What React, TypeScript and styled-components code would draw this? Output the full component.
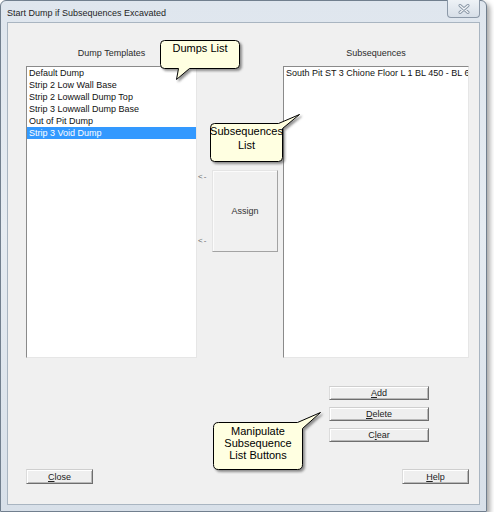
import * as React from "react";
import styled, { createGlobalStyle } from "styled-components";

const GlobalStyle = createGlobalStyle`
  html, body {
    margin: 0;
    padding: 0;
    background: #ffffff;
  }
  body {
    font-family: "Liberation Sans", Arial, sans-serif;
  }
`;

const Window = styled.div`
  position: relative;
  box-sizing: border-box;
  width: 487px;
  height: 512px;
  border: 1px solid #717f8e;
  border-radius: 6px 6px 0 0;
  background: linear-gradient(180deg, #dfe6ee 0%, #e6ecf2 45%, #d8e0e9 100%);
  box-shadow: 3px 3px 5px rgba(0, 0, 0, 0.35);
  display: flex;
  flex-direction: column;
`;

const TitleBar = styled.div`
  height: 21px;
  display: flex;
  align-items: flex-start;
  justify-content: space-between;
  padding: 0 6px;
`;

const Title = styled.span`
  font-size: 9px;
  line-height: 24px;
  color: #1e1e1e;
`;

const CloseBox = styled.div`
  box-sizing: border-box;
  width: 33px;
  height: 18px;
  margin-top: -1px;
  border: 1px solid #8c99a8;
  border-top: none;
  border-radius: 0 0 4px 4px;
  background: linear-gradient(180deg, #eef2f6, #d7dfe8);
  display: flex;
  align-items: center;
  justify-content: center;
`;

const Client = styled.div`
  box-sizing: border-box;
  height: 483px;
  margin: 0 6px;
  border: 1px solid #a9b5c1;
  background: #f0f0f0;
  padding: 24px 10px 20px 18px;
  display: flex;
  flex-direction: column;
`;

const Panes = styled.div`
  display: grid;
  grid-template-columns: 171px 86px 186px;
  grid-template-rows: 13px 292px;
  row-gap: 6px;
`;

const PaneLabel = styled.div<{ $col: number }>`
  grid-column: ${(p) => p.$col};
  grid-row: 1;
  font-size: 9px;
  line-height: 13px;
  text-align: center;
  color: #2a2a2a;
`;

const ListBox = styled.div<{ $col: number }>`
  grid-column: ${(p) => p.$col};
  grid-row: 2;
  box-sizing: border-box;
  background: #ffffff;
  border: 1px solid;
  border-color: #8a8a8a #e6e6e6 #e6e6e6 #8a8a8a;
  overflow: hidden;
`;

const ListItem = styled.div<{ $selected?: boolean }>`
  height: 12px;
  line-height: 12px;
  padding-left: 2px;
  font-size: 9px;
  white-space: nowrap;
  color: ${(p) => (p.$selected ? "#ffffff" : "#111111")};
  background: ${(p) => (p.$selected ? "#3399ff" : "transparent")};
`;

const Middle = styled.div`
  grid-column: 2;
  grid-row: 2;
  padding-top: 104px;
  display: flex;
  align-items: flex-start;
`;

const Arrows = styled.div`
  box-sizing: border-box;
  width: 15px;
  height: 82px;
  padding: 2px 0 6px 1px;
  display: flex;
  flex-direction: column;
  justify-content: space-between;
  font-size: 8px;
  line-height: 10px;
  letter-spacing: 1px;
  color: #6a6a6a;
`;

const AssignButton = styled.div`
  box-sizing: border-box;
  width: 66px;
  height: 82px;
  border: 1px solid;
  border-color: #e4e4e4 #a3a3a3 #a3a3a3 #e4e4e4;
  box-shadow: inset 1px 1px 0 #fbfbfb;
  background: #f0f0f0;
  display: flex;
  align-items: center;
  justify-content: center;
  font-size: 9px;
  color: #333333;
`;

const ButtonStack = styled.div`
  margin-top: 28px;
  margin-left: 303px;
  display: flex;
  flex-direction: column;
  gap: 7px;
`;

const Btn = styled.div<{ $w: number; $h: number }>`
  box-sizing: border-box;
  width: ${(p) => p.$w}px;
  height: ${(p) => p.$h}px;
  border: 1px solid;
  border-color: #cfcfcf #6e6e6e #6e6e6e #dcdcdc;
  box-shadow: inset 1px 1px 0 #ffffff, inset -1px -1px 0 #b9b9b9;
  background: #efefef;
  display: flex;
  align-items: center;
  justify-content: center;
  font-size: 9px;
  color: #222222;
`;

const Key = styled.span`
  text-decoration: underline;
`;

const BottomRow = styled.div`
  margin-top: 27px;
  display: flex;
  justify-content: space-between;
`;

const CalloutBox = styled.div<{ $x: number; $y: number; $w: number; $h: number }>`
  position: absolute;
  left: ${(p) => p.$x}px;
  top: ${(p) => p.$y}px;
  width: ${(p) => p.$w}px;
  height: ${(p) => p.$h}px;
`;

const CalloutShape = styled.svg`
  position: absolute;
  left: 0;
  top: 0;
  overflow: visible;
`;

const CalloutText = styled.div<{ $lh: number; $pad: number }>`
  position: relative;
  padding-top: ${(p) => p.$pad}px;
  text-align: center;
  font-size: 11px;
  line-height: ${(p) => p.$lh}px;
  color: #000000;
  white-space: nowrap;
`;

interface CalloutProps {
  id: string;
  x: number;
  y: number;
  w: number;
  h: number;
  d: string;
  lh: number;
  pad: number;
  lines: string[];
}

const Callout: React.FC<CalloutProps> = ({ id, x, y, w, h, d, lh, pad, lines }) => (
  <CalloutBox $x={x} $y={y} $w={w} $h={h}>
    <CalloutShape width={w} height={h}>
      <defs>
        <filter id={id} x="-20%" y="-40%" width="150%" height="180%">
          <feDropShadow dx="2" dy="2" stdDeviation="1" floodColor="#3a3a3a" floodOpacity="0.55" />
        </filter>
      </defs>
      <path
        d={d}
        transform="translate(0.5 0.5)"
        fill="#ffffe1"
        stroke="#000000"
        strokeWidth="1"
        filter={`url(#${id})`}
      />
    </CalloutShape>
    <CalloutText $lh={lh} $pad={pad}>
      {lines.map((l) => (
        <div key={l}>{l}</div>
      ))}
    </CalloutText>
  </CalloutBox>
);

const dumps = [
  "Default Dump",
  "Strip 2 Low Wall Base",
  "Strip 2 Lowwall Dump Top",
  "Strip 3 Lowwall Dump Base",
  "Out of Pit Dump",
  "Strip 3 Void Dump",
];

export default function App() {
  return (
    <>
      <GlobalStyle />
      <Window>
        <TitleBar>
          <Title>Start Dump if Subsequences Excavated</Title>
          <CloseBox>
            <svg width="12" height="10" viewBox="0 0 12 10">
              <path d="M2 1.5 L10 8.5 M10 1.5 L2 8.5" stroke="#8795a4" strokeWidth="3" strokeLinecap="round" />
              <path d="M2 1.5 L10 8.5 M10 1.5 L2 8.5" stroke="#f3f5f8" strokeWidth="1.3" strokeLinecap="round" />
            </svg>
          </CloseBox>
        </TitleBar>
        <Client>
          <Panes>
            <PaneLabel $col={1}>Dump Templates</PaneLabel>
            <PaneLabel $col={3}>Subsequences</PaneLabel>
            <ListBox $col={1}>
              {dumps.map((d, i) => (
                <ListItem key={d} $selected={i === dumps.length - 1}>
                  {d}
                </ListItem>
              ))}
            </ListBox>
            <Middle>
              <Arrows>
                <span>&lt;-</span>
                <span>&lt;-</span>
              </Arrows>
              <AssignButton>Assign</AssignButton>
            </Middle>
            <ListBox $col={3}>
              <ListItem>South Pit ST 3 Chione Floor L 1 BL 450 - BL 600</ListItem>
            </ListBox>
          </Panes>
          <ButtonStack>
            <Btn $w={100} $h={14}>
              <Key>A</Key>dd
            </Btn>
            <Btn $w={100} $h={14}>
              <Key>D</Key>elete
            </Btn>
            <Btn $w={100} $h={14}>
              C<Key>l</Key>ear
            </Btn>
          </ButtonStack>
          <BottomRow>
            <Btn $w={67} $h={15}>
              <Key>C</Key>lose
            </Btn>
            <Btn $w={67} $h={15}>
              <Key>H</Key>elp
            </Btn>
          </BottomRow>
        </Client>
        <Callout
          id="c1"
          x={159}
          y={39}
          w={80}
          h={29}
          lh={13}
          pad={2}
          d="M4,0 H75 Q79,0 79,4 V24 Q79,28 75,28 H29 L16,39 L18,28 H4 Q0,28 0,24 V4 Q0,0 4,0 Z"
          lines={["Dumps List"]}
        />
        <Callout
          id="c2"
          x={209}
          y={122}
          w={73}
          h={39}
          lh={14}
          pad={1}
          d="M4,0 H68 L89,-9 L72,5 V34 Q72,38 68,38 H4 Q0,38 0,34 V4 Q0,0 4,0 Z"
          lines={["Subsequences", "List"]}
        />
        <Callout
          id="c3"
          x={212}
          y={421}
          w={90}
          h={48}
          lh={12}
          pad={3}
          d="M5,0 H84 L107,-10 L89,6 V42 Q89,47 84,47 H5 Q0,47 0,42 V5 Q0,0 5,0 Z"
          lines={["Manipulate", "Subsequence", "List Buttons"]}
        />
      </Window>
    </>
  );
}
